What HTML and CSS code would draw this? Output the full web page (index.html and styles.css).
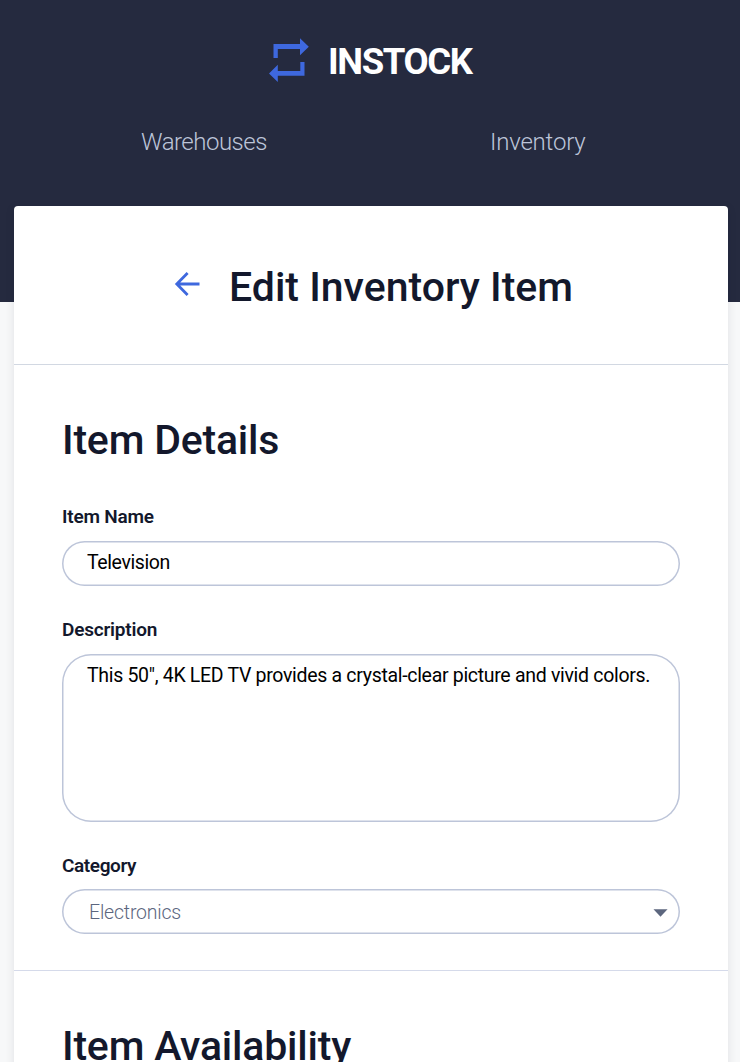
FILE: index.html
```html
<!DOCTYPE html>
<html lang="en">
<head>
<meta charset="utf-8">
<title>InStock</title>
<link rel="stylesheet" href="styles.css">
</head>
<body>
<header class="header">
  <div class="logo">
    <svg class="logo__icon" viewBox="0 0 40 44" aria-hidden="true">
      <path d="M4.5 20V6H31V.3L39.8 8.7 31 17.3V11H8.8V20zM35.5 24V37.7H8.8V44L0 35.4 8.8 26.7V33H31.3V24z"/>
    </svg>
    <span class="logo__text">INSTOCK</span>
  </div>
  <nav class="nav">
    <a class="nav__link nav__link--warehouses">Warehouses</a>
    <a class="nav__link nav__link--inventory">Inventory</a>
  </nav>
</header>
<main class="card">
  <div class="card__head">
    <svg class="back" viewBox="0 0 26 26" aria-hidden="true"><path d="M13.6 2L2.8 13 13.6 24M3 13H25.5"/></svg>
    <h1 class="title title--page">Edit Inventory Item</h1>
  </div>
  <section class="section section--details">
    <h2 class="title title--details">Item Details</h2>
    <label class="label label--name" for="name">Item Name</label>
    <input class="field field--input" id="name" value="Television">
    <label class="label label--description" for="description">Description</label>
    <textarea class="field field--area" id="description">This 50", 4K LED TV provides a crystal-clear picture and vivid colors.</textarea>
    <label class="label label--category">Category</label>
    <div class="field field--select">
      <span>Electronics</span>
      <svg class="caret" viewBox="0 0 16 8" aria-hidden="true"><path d="M.5 0H15.5L8 8z"/></svg>
    </div>
  </section>
  <section class="section">
    <h2 class="title title--availability">Item Availability</h2>
  </section>
</main>
</body>
</html>
```
FILE: styles.css
```css
* { box-sizing: border-box; }
body {
  margin: 0;
  height: 1062px;
  overflow: hidden;
  background: #f7f8f9;
  color: #13182c;
  font-family: Roboto, "Open Sans", sans-serif;
}
.header {
  height: 302px;
  padding-top: 38px;
  background: #252a3f;
}
.logo {
  display: flex;
  align-items: center;
  height: 44px;
  padding-left: 269px;
}
.logo__icon { width: 40px; height: 44px; fill: #3e68de; }
.logo__text {
  margin: 3px 0 0 19px;
  color: #fff;
  font-size: 36.5px;
  font-weight: 700;
  line-height: 44px;
  letter-spacing: -1.4px;
}
.nav {
  display: flex;
  padding: 44px 0 0 141px;
}
.nav__link {
  color: #bdc5d9;
  font-size: 24px;
  font-weight: 300;
  line-height: 32px;
}
.nav__link--warehouses { width: 349px; letter-spacing: -0.5px; }
.nav__link--inventory { letter-spacing: -0.2px; }
.card {
  margin: -96px 12px 0 14px;
  height: 900px;
  background: #fff;
  border-radius: 4px;
  box-shadow: 0 2px 10px rgba(19, 24, 44, 0.1);
}
.card__head {
  display: flex;
  gap: 29px;
  height: 159px;
  padding: 57px 0 0 160px;
  border-bottom: 1px solid #d2d8e2;
}
.back {
  width: 26px;
  height: 26px;
  margin-top: 8px;
  fill: none;
  stroke: #3e68de;
  stroke-width: 2.8;
}
.title {
  margin: 0;
  font-size: 41px;
  font-weight: 500;
  line-height: 48px;
  white-space: nowrap;
}
.title--page { letter-spacing: 0; }
.title--details,
.title--availability { letter-spacing: -0.2px; }
.section { padding: 51px 48px 0; }
.section--details { height: 606px; border-bottom: 1px solid #d5daea; }
.label {
  display: block;
  height: 24px;
  font-size: 19px;
  font-weight: 600;
  line-height: 24px;
  letter-spacing: -0.2px;
}
.label--name { margin: 41px 0 12px; }
.label--description { margin: 32px 0 12px; }
.label--category { margin: 32px 0 11px; letter-spacing: -0.4px; }
.field {
  display: block;
  width: 618px;
  height: 45px;
  margin: 0;
  border: 0;
  border-radius: 22.5px;
  box-shadow: inset 0 0 0 1.5px #bdc5d9;
  outline: 0;
  resize: none;
  background: #fff;
  color: #000;
  font: 400 19.5px/24px Roboto, "Open Sans", sans-serif;
}
.field--input {
  padding: 0 25px 2px;
  letter-spacing: -0.4px;
}
.field--area {
  height: 168px;
  padding: 10px 20px 0 25px;
  border-radius: 29px;
  letter-spacing: -0.31px;
  overflow: hidden;
}
.field--select {
  display: flex;
  align-items: center;
  justify-content: space-between;
  padding: 2px 12px 0 27px;
  color: #5c667e;
  font-weight: 300;
  letter-spacing: -0.2px;
}
.caret { width: 15px; height: 8px; fill: #5c667e; }
```
